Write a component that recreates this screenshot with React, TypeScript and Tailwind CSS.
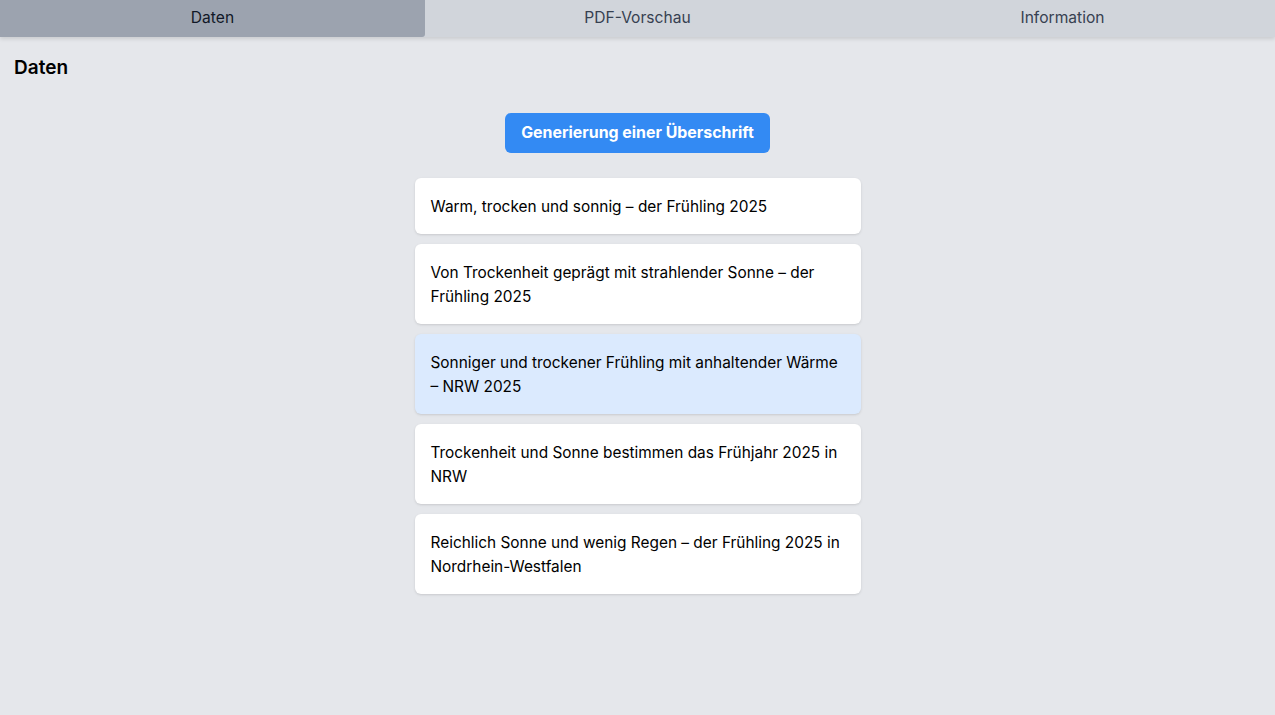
import { useState } from 'react';

const tabs = ['Daten', 'PDF-Vorschau', 'Information'];

const headlines = [
    'Warm, trocken und sonnig – der Frühling 2025',
    'Von Trockenheit geprägt mit strahlender Sonne – der Frühling 2025',
    'Sonniger und trockener Frühling mit anhaltender Wärme – NRW 2025',
    'Trockenheit und Sonne bestimmen das Frühjahr 2025 in NRW',
    'Reichlich Sonne und wenig Regen – der Frühling 2025 in Nordrhein-Westfalen',
];

export default function App() {
    const [active, setActive] = useState(0);
    const [selected, setSelected] = useState(2);

    return (
        <div className="min-h-screen bg-[#e5e7eb] font-['Inter',sans-serif] text-black">
            <div className="flex h-[37px] bg-[#d1d5db] shadow-[0_2px_4px_rgba(0,0,0,0.12)]">
                {tabs.map((t, i) => (
                    <button
                        key={t}
                        onClick={() => setActive(i)}
                        className={
                            i === active
                                ? 'flex-1 bg-[#9ca3af] rounded-br-[3px] pb-[2px] text-[15.6px] text-[#111827]'
                                : 'flex-1 pb-[2px] text-[15.6px] text-[#374151]'
                        }
                    >
                        {t}
                    </button>
                ))}
            </div>
            <div className="px-[14px] pt-[18px]">
                <h1 className="text-[19px] font-semibold leading-[26px]">Daten</h1>
                <div className="flex flex-col items-center">
                    <button className="mt-[32px] h-[40px] px-4 rounded-md bg-[#338af3] text-white text-[15.9px] font-bold">
                        Generierung einer Überschrift
                    </button>
                    <div className="mt-[25px] flex w-[446px] flex-col gap-[10px]">
                        {headlines.map((h, i) => (
                            <div
                                key={h}
                                onClick={() => setSelected(i)}
                                className={
                                    i === selected
                                        ? 'rounded-md bg-[#dbeafe] px-4 pt-[17px] pb-[15px] text-[15.4px] leading-6 shadow-sm cursor-pointer'
                                        : 'rounded-md bg-white px-4 pt-[17px] pb-[15px] text-[15.4px] leading-6 shadow-sm cursor-pointer'
                                }
                            >
                                {h}
                            </div>
                        ))}
                    </div>
                </div>
            </div>
        </div>
    );
}
